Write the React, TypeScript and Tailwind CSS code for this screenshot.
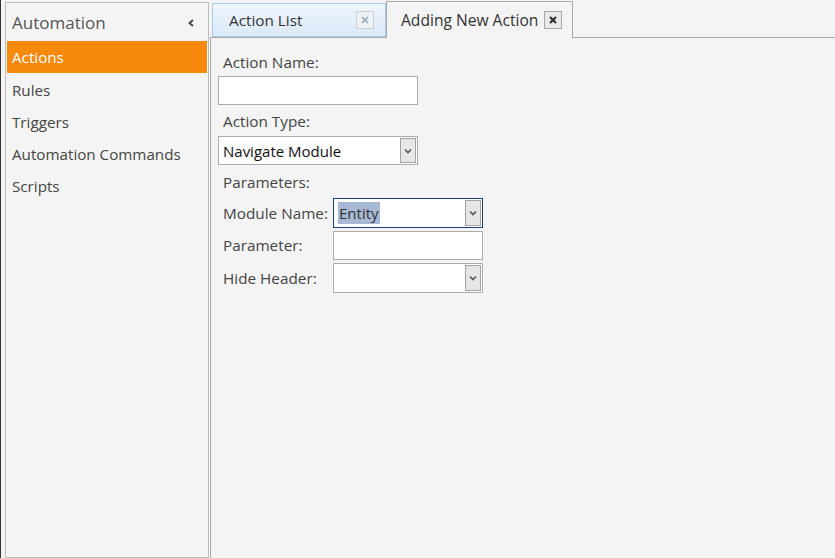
import React from "react";

const font = { fontFamily: "'Open Sans', 'Noto Sans', sans-serif" };

// small grey dropdown button used by the combo boxes
const DropButton = () => (
  <span className="flex h-full w-[16px] items-center justify-center border border-[#a3a3a3] bg-[#e6e6e6]">
    <svg width="8" height="6" viewBox="0 0 8 6">
      <path d="M1 1.5 L4 4.5 L7 1.5" fill="none" stroke="#555" strokeWidth="1.6" />
    </svg>
  </span>
);

const CloseBox = ({ active }: { active?: boolean }) => (
  <span
    className={
      active
        ? "flex h-[18px] w-[18px] items-center justify-center border border-[#a8a8a8] bg-[#e9e9e9]"
        : "flex h-[18px] w-[18px] items-center justify-center border border-[#cfcfcf] bg-[#eef2f6]"
    }
  >
    <svg width="8" height="8" viewBox="0 0 8 8">
      <path
        d="M1 1 L7 7 M7 1 L1 7"
        stroke={active ? "#2a2a2a" : "#9aa6b4"}
        strokeWidth={active ? 2 : 1.6}
      />
    </svg>
  </span>
);

const Combo = ({
  value,
  focused,
  wide,
}: {
  value?: string;
  focused?: boolean;
  wide?: boolean;
}) => (
  <div
    className={
      (wide ? "w-[200px] h-[29px] " : "w-[150px] h-[30px] ") +
      (focused ? "border-[#1d3f73] " : "border-[#ababab] ") +
      "flex items-center justify-between border bg-white py-[1px] pr-[1px] pl-[4px]"
    }
  >
    {focused ? (
      <span className="bg-[#a7b9d5] px-[1px] text-[15px] leading-[22px] text-[#333]">{value}</span>
    ) : (
      <span className="text-[15px] leading-[22px] text-[#111]">{value}</span>
    )}
    <DropButton />
  </div>
);

const menu = ["Actions", "Rules", "Triggers", "Automation Commands", "Scripts"];

export default function App() {
  return (
    <div className="flex h-[558px] w-[835px] overflow-hidden bg-[#f4f4f4]" style={font}>
      <div className="w-px bg-[#333]" />

      {/* side navigation */}
      <div className="ml-[4px] mt-[2px] flex w-[204px] flex-col border border-[#bdbdbd] bg-[#f4f4f4]">
        <div className="flex h-[38px] items-center justify-between pl-[6px] pr-[14px] pt-[1px]">
          <span className="text-[17px] text-[#555]">Automation</span>
          <svg width="6" height="8" viewBox="0 0 6 8">
            <path d="M5 1 L1.5 4 L5 7" fill="none" stroke="#444" strokeWidth="1.8" />
          </svg>
        </div>
        <div className="flex flex-col px-[1px]">
          {menu.map((m, i) => (
            <div
              key={m}
              className={
                i === 0
                  ? "flex h-[32px] items-center bg-[#f7890c] pl-[5px] pt-[1px] text-[15.2px] text-white"
                  : "flex h-[32px] items-center pl-[5px] pt-[2px] text-[15.2px] text-[#444]"
              }
            >
              {m}
            </div>
          ))}
        </div>
      </div>

      {/* document area */}
      <div className="ml-[1px] flex flex-1 flex-col">
        <div className="flex h-[37px] items-end pl-[2px]">
          <div className="flex h-[34px] w-[174px] items-center justify-between border border-[#a9cbe9] bg-gradient-to-b from-[#eef5fd] to-[#dbe9f8] pl-[16px] pr-[11px]">
            <span className="text-[15.3px] text-[#333]">Action List</span>
            <CloseBox />
          </div>
          <div className="relative z-10 -mb-px flex h-[37px] w-[187px] items-start justify-between border border-b-0 border-[#a9a9a9] bg-[#f4f4f4] pl-[14px] pr-[10px] pt-[7px]">
            <span className="text-[15.6px] leading-[22px] text-[#333]">Adding New Action</span>
            <span className="mt-[2px]">
              <CloseBox active />
            </span>
          </div>
        </div>

        <div className="flex flex-1 flex-col border-l border-t border-[#aaaaaa] bg-[#f4f4f4] pl-[7px] pt-[12px] text-[15.3px] text-[#444]">
          <div className="pl-[5px] leading-[24px]">Action Name:</div>
          <div className="mt-[2px] h-[29px] w-[200px] border border-[#ababab] bg-white" />
          <div className="mt-[4px] pl-[5px] leading-[24px]">Action Type:</div>
          <div className="mt-[3px]">
            <Combo value="Navigate Module" wide />
          </div>
          <div className="mt-[5px] pl-[5px] leading-[24px]">Parameters:</div>

          <div className="mt-[4px] flex flex-col gap-[3px]">
            <div className="flex items-center">
              <span className="w-[115px] pl-[5px]">Module Name:</span>
              <Combo value="Entity" focused />
            </div>
            <div className="flex items-center">
              <span className="w-[115px] pl-[5px]">Parameter:</span>
              <div className="h-[29px] w-[150px] border border-[#ababab] bg-white" />
            </div>
            <div className="flex items-center">
              <span className="w-[115px] pl-[5px]">Hide Header:</span>
              <Combo />
            </div>
          </div>
        </div>
      </div>
    </div>
  );
}
